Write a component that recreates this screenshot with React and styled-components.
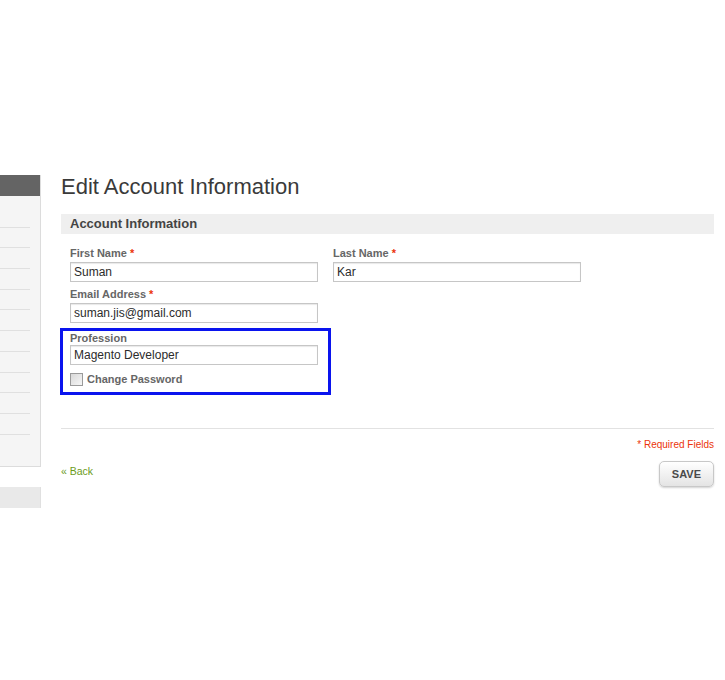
import styled, { createGlobalStyle } from "styled-components"

const GlobalStyle = createGlobalStyle`
body {
  margin: 0;
  background: #fff;
  font-family: "Liberation Sans", Arial, sans-serif;
}
`

const menuItems = Array.from({ length: 11 })

function Field({ label, value, required }) {
  return (
    <FieldBox>
      <Label>
        {label}
        {required && <Req> *</Req>}
      </Label>
      <Input defaultValue={value} />
    </FieldBox>
  )
}

function App() {
  return (
    <>
      <GlobalStyle />
      <Page>
        <Sidebar>
          <SideHead />
          <SideBody>
            {menuItems.map((_, i) => (
              <SideItem key={i} />
            ))}
          </SideBody>
          <SideBlock />
        </Sidebar>

        <Main>
          <Title>Edit Account Information</Title>
          <SectionHead>Account Information</SectionHead>
          <Fieldset>
            <Row>
              <Field label="First Name" value="Suman" required />
              <Field label="Last Name" value="Kar" required />
            </Row>
            <Row>
              <Field label="Email Address" value="suman.jis@gmail.com" required />
            </Row>
            <Highlight>
              <Field label="Profession" value="Magento Developer" />
              <CheckRow>
                <Check type="checkbox" />
                <CheckLabel>Change Password</CheckLabel>
              </CheckRow>
            </Highlight>
          </Fieldset>

          <ButtonsSet>
            <Required>* Required Fields</Required>
            <Actions>
              <Back href="#">« Back</Back>
              <SaveButton>SAVE</SaveButton>
            </Actions>
          </ButtonsSet>
        </Main>
      </Page>
    </>
  )
}

export default App

const Page = styled.div`
display: flex;
gap: 20px;
padding-top: 175px;
`

const Sidebar = styled.aside`
width: 41px;
flex-shrink: 0;
`

const SideHead = styled.div`
height: 21px;
background: #646464;
border-right: 1px solid #ddd;
`

const SideBody = styled.div`
height: 271px;
box-sizing: border-box;
background: #f5f5f5;
border-right: 1px solid #dcdcdc;
border-bottom: 1px solid #dcdcdc;
padding-top: 11px;
`

const SideItem = styled.div`
height: 19.7px;
margin-right: 10px;
border-bottom: 1px solid #e0e0e0;
`

const SideBlock = styled.div`
height: 21px;
margin-top: 20px;
background: #e9e9e9;
border-right: 1px solid #e0e0e0;
`

const Main = styled.main`
width: 653px;
`

const Title = styled.h1`
margin: -1px 0 15px;
font-size: 22px;
font-weight: normal;
line-height: 25px;
color: #3a3a3a;
`

const SectionHead = styled.h2`
margin: 0;
height: 20px;
line-height: 20px;
padding-left: 9px;
background: #efefef;
font-size: 13px;
font-weight: bold;
color: #444;
`

const Fieldset = styled.div`
padding: 12px 9px 0;
`

const Row = styled.div`
display: flex;
gap: 15px;
`

const FieldBox = styled.div`
width: 248px;
margin-bottom: 5px;
`

const Label = styled.label`
display: block;
font-size: 11px;
font-weight: bold;
line-height: 14px;
color: #666;
margin-bottom: 2px;
`

const Req = styled.span`
color: #eb340a;
`

const Input = styled.input`
display: block;
width: 100%;
height: 20px;
box-sizing: border-box;
border: 1px solid #c6c6c6;
box-shadow: inset 0 1px 1px #e8e8e8;
padding: 0 3px;
font-family: "Liberation Sans", Arial, sans-serif;
font-size: 12px;
color: #2b2b2b;
outline: none;
`

const Highlight = styled.div`
box-sizing: border-box;
width: 271px;
margin-left: -10px;
border: 3px solid #0a14ee;
padding: 0 0 0 7px;

${FieldBox} {
  margin-bottom: 0;
}

${Label} {
  margin-bottom: 0;
}
`

const CheckRow = styled.div`
display: flex;
align-items: center;
gap: 4px;
padding: 7px 0 6px;
`

const Check = styled.input`
appearance: none;
margin: 0;
width: 13px;
height: 13px;
box-sizing: border-box;
border: 1px solid #9a9a9a;
background: linear-gradient(135deg, #d8d8d8, #f6f6f6);
`

const CheckLabel = styled.span`
font-size: 11px;
font-weight: bold;
color: #666;
line-height: 14px;
`

const ButtonsSet = styled.div`
margin-top: 33px;
border-top: 1px solid #e2e2e2;
padding-top: 9px;
`

const Required = styled.p`
margin: 0;
text-align: right;
font-size: 10px;
line-height: 14px;
color: #eb340a;
`

const Actions = styled.div`
display: flex;
justify-content: space-between;
align-items: flex-start;
margin-top: 9px;
`

const Back = styled.a`
margin-top: 3px;
font-size: 10.5px;
line-height: 14px;
color: #6b9b1a;
text-decoration: none;
`

const SaveButton = styled.button`
height: 26px;
padding: 0 12px;
border: 1px solid #c8c8c8;
border-radius: 5px;
background: linear-gradient(#ffffff, #e4e4e4);
box-shadow: 0 1px 2px rgba(0, 0, 0, 0.18);
font-family: "Liberation Sans", Arial, sans-serif;
font-size: 11px;
font-weight: bold;
color: #4a4a4a;
`
